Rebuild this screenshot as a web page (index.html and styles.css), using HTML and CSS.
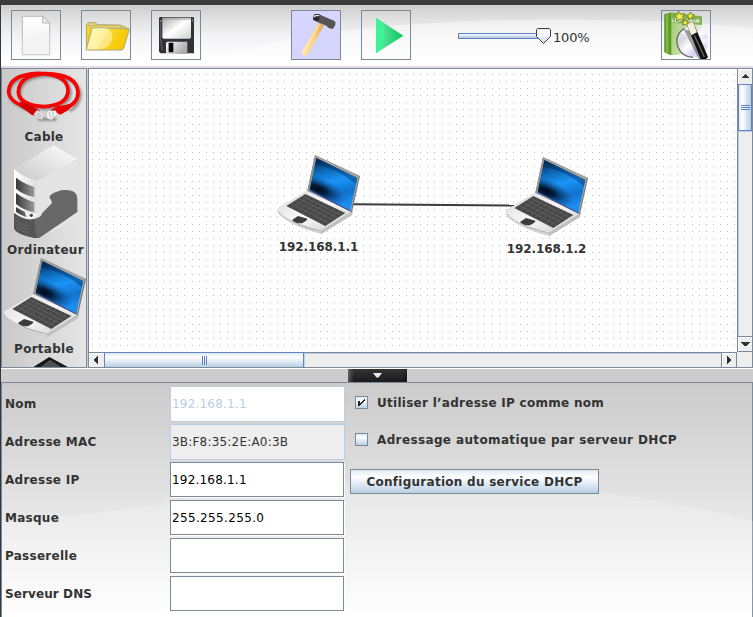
FILE: index.html
```html
<!DOCTYPE html>
<html lang="fr">
<head>
<meta charset="utf-8">
<title>Réseau</title>
<link rel="stylesheet" href="styles.css">
</head>
<body>
<svg class="defs" width="0" height="0">
  <defs>
    <linearGradient id="base" x1="0" y1="0" x2="1" y2="1"><stop offset="0" stop-color="#d8d8d8"/><stop offset=".5" stop-color="#f8f8f8"/><stop offset="1" stop-color="#c8c8c8"/></linearGradient>
    <linearGradient id="screen" x1="0" y1=".1" x2=".2" y2="1"><stop offset="0" stop-color="#06356a"/><stop offset=".22" stop-color="#0d68b8"/><stop offset=".48" stop-color="#1b94f8"/><stop offset=".75" stop-color="#1173cd"/><stop offset="1" stop-color="#1d8eee"/></linearGradient>
    <radialGradient id="shade" gradientUnits="userSpaceOnUse" cx="0" cy="0" r="1" gradientTransform="translate(143 132) rotate(22) scale(92 36)"><stop offset="0" stop-color="#000814"/><stop offset=".3" stop-color="#00142c" stop-opacity=".9"/><stop offset="1" stop-color="#0a4a90" stop-opacity="0"/></radialGradient>
    <symbol id="laptop" viewBox="21 27 249 240">
      <path d="M24 190 L117 134 L248 199 L246 210 L154 266 Q70 245 31 211 Q21 203 24 190Z" fill="#a2a2a2"/>
      <path d="M24 190 L117 134 L248 199 L154 257 Q80 241 36 211 Q21 200 24 190Z" fill="url(#base)"/>
      <path d="M26 198 Q70 244 153 258 V266 Q65 245 28 207Z" fill="#d4d4d4"/>
      <path d="M154 257 L246 202 L246 209 L154 266Z" fill="#c2c2c2"/>
      <path d="M49 183 L106 147 L226 204 L166 243Z" fill="#484848"/>
      <path d="M62 175 L178 235 M74 167 L191 227 M86 160 L203 219 M97 153 L215 211" stroke="#858585" stroke-width="1.5" stroke-dasharray="7 2"/>
      <path d="M64 190 L121 155 M79 198 L136 162 M94 206 L151 170 M109 214 L166 177 M125 222 L181 184 M140 230 L196 191 M154 237 L212 198" stroke="#6a6a6a" stroke-width="1.3"/>
      <path d="M66 225 L84 213 L112 221 Q113 226 95 235 Q76 236 66 225Z" fill="#3c3c3c"/>
      <path d="M112 137 L135 30 L270 93 L246 202Z" fill="#777"/>
      <path d="M116 135 L138 36 L266 95 L243 199Z" fill="#b0aaa2"/>
      <path d="M119 134 L138 38 L262 98 L241 197Z" fill="url(#screen)"/>
      <path d="M119 134 L138 38 L262 98 L241 197Z" fill="url(#shade)"/>
      <path d="M138 38 L262 98 L258 118 Q195 66 135 61Z" fill="#042347" opacity=".38"/>
      <path d="M119 135 L241 198" stroke="#26389c" stroke-width="2.5"/>
      <path d="M112 137 L135 31 L140 34 L117 139Z" fill="#939393"/>
      <path d="M136 31 L268 92 L267 96 L137 37Z" fill="#b5b5b5" opacity=".65"/>
    </symbol>
    <pattern id="grid" width="50" height="50" patternUnits="userSpaceOnUse" x="3" y="5">
      <path d="M0 .5H43M0 7.5H43M0 14.5H43M0 21.5H43M0 28.5H43M0 35.5H43M0 42.5H43" stroke="#bdbdbd" stroke-dasharray="1 6" shape-rendering="crispEdges"/>
    </pattern>
  </defs>
</svg>
<div class="window">
  <header class="toolbar">
    <button class="tool"><svg width="48" height="48" viewBox="36 33 144 144"><defs><linearGradient id="paper" x1="0" y1="0" x2="0" y2="1"><stop offset="0" stop-color="#fff"/><stop offset=".45" stop-color="#f7f7f7"/><stop offset="1" stop-color="#fff"/></linearGradient></defs><path d="M67 49H128L149 69V164H67Z" fill="url(#paper)" stroke="#a9a9a9" stroke-width="2.4"/><path d="M68 123Q100 99 148 98V163H68Z" fill="#f1f1f1" opacity=".8"/><path d="M128 49V69H149Z" fill="#ececec" stroke="#a9a9a9" stroke-width="2.4"/></svg></button>
    <button class="tool"><svg width="48" height="48" viewBox="246 33 144 144"><defs><linearGradient id="fold" x1="0" y1="0" x2="1" y2=".3"><stop offset="0" stop-color="#fff4a8"/><stop offset=".5" stop-color="#fde860"/><stop offset=".52" stop-color="#fbd82c"/><stop offset="1" stop-color="#f8c800"/></linearGradient></defs><path d="M259 148V76L265 68H287L291 74L360 75L385 86L363 145Z" fill="#f9d01c" stroke="#aaa78a" stroke-width="3"/><path d="M264 76V68H287V76Z" fill="#f5d765" stroke="#aaa78a" stroke-width="2"/><path d="M266 77H358L368 84L274 86Z" fill="#e8d373" stroke="#b9ad72" stroke-width="1.5"/><path d="M258 150L276 86Q277 83 282 83L388 87L371 145Q369 150 364 150Z" fill="url(#fold)" stroke="#aaa78a" stroke-width="3"/><path d="M262 147L278 88Q303 79 325 87Q345 100 333 126Q324 144 302 147Z" fill="#fffbd5" opacity=".5"/></svg></button>
    <button class="tool"><svg width="48" height="48" viewBox="456 33 144 144"><defs><linearGradient id="metal" x1="0" y1="0" x2="1" y2="1"><stop offset="0" stop-color="#aaa"/><stop offset=".5" stop-color="#fff"/><stop offset="1" stop-color="#d0d0d0"/></linearGradient><linearGradient id="metal2" x1="0" y1="0" x2="1" y2=".5"><stop offset="0" stop-color="#fff"/><stop offset="1" stop-color="#aaa"/></linearGradient></defs><path d="M479 51H580L582 54V160H481L477 154V54Z" fill="#30333a"/><path d="M482 68Q480 119 487 150" stroke="#565961" stroke-width="4" fill="none"/><path d="M487 53H573V112L569 116H491L487 112Z" fill="url(#metal)"/><path d="M487 53H573V60H487Z" fill="#999" opacity=".5"/><path d="M498 129L502 125H562V162H498Z" fill="url(#metal2)"/><rect x="506" y="128" width="14" height="29" rx="2" fill="#080808"/><path d="M480 60H485V66H480ZM576 57H579V65H576Z" fill="#777"/></svg></button>
    <button class="tool tool--active tool--design"><svg width="48" height="48" viewBox="36 33 144 144"><defs><linearGradient id="wood"><stop offset="0" stop-color="#ffe8ac"/><stop offset=".55" stop-color="#ffd17c"/><stop offset="1" stop-color="#d9a95f"/></linearGradient></defs><path d="M117 67L133 75L84 162Q80 169 73 167Q64 163 66 154Z" fill="url(#wood)"/><path d="M118 72L69 158" stroke="#fff3cc" stroke-width="3"/><path d="M102 45Q105 40 116 43L164 63Q169 68 165 77L158 87L146 84L139 77L112 66L99 59Z" fill="#555"/><path d="M102 45Q105 40 116 43L122 45L114 65L99 59Z" fill="#292929"/><path d="M103 51L106 47L118 47" stroke="#e8e8e8" stroke-width="4" fill="none"/></svg></button>
    <button class="tool"><svg width="48" height="48" viewBox="246 33 144 144"><defs><linearGradient id="play"><stop offset="0" stop-color="#6cebaa"/><stop offset="1" stop-color="#08c45c"/></linearGradient></defs><path d="M288 53L370 107L288 160Z" fill="url(#play)"/><path d="M288 53L303 63Q323 103 302 150L288 160Z" fill="#3df395"/></svg></button>
    <div class="speed">
      <svg width="96" height="18" viewBox="0 0 96 18"><defs><linearGradient id="track" x1="0" y1="0" x2="0" y2="1"><stop offset="0" stop-color="#fff"/><stop offset=".5" stop-color="#d4e2ef"/><stop offset="1" stop-color="#9ebbe0"/></linearGradient><linearGradient id="thumb" x1="0" y1="0" x2="0" y2="1"><stop offset="0" stop-color="#dce8f3"/><stop offset=".3" stop-color="#fff"/><stop offset="1" stop-color="#c5d9ed"/></linearGradient></defs><rect x=".5" y="6.5" width="85" height="5" fill="url(#track)" stroke="#6382bf"/><path d="M79.5 1.5H91.5L92.5 2.5V9.5L85.5 16.5L78.5 9.5V2.5Z" fill="url(#thumb)" stroke="#3b4046"/></svg>
      <span class="speed__value">100%</span>
    </div>
    <button class="tool tool--wizard"><svg width="48" height="48" viewBox="666 33 144 144"><defs><linearGradient id="green" x1="0" y1="0" x2="1" y2=".3"><stop offset="0" stop-color="#8fc356"/><stop offset=".45" stop-color="#b5d68f"/><stop offset="1" stop-color="#e4efd8"/></linearGradient><linearGradient id="disc" x1="0" y1="0" x2="1" y2="1"><stop offset="0" stop-color="#f4f4ff"/><stop offset=".3" stop-color="#d5d6de"/><stop offset=".5" stop-color="#fff"/><stop offset=".7" stop-color="#d3d4f2"/><stop offset="1" stop-color="#f4f4f4"/></linearGradient></defs><path d="M673 43L695 36L786 48L784 158L694 166L673 157Z" fill="url(#green)"/><path d="M673 43L694 38V166L673 157Z" fill="#5e9927"/><path d="M678 44L685 42V162L678 158Z" fill="#80ba44"/><path d="M694 38L786 49V75L694 68Z" fill="#83b054"/><path d="M699 56l-4 3 7 4-7 3M706 56h7v10h-7zM719 66V57h8M719 61h6M731 57h8M735 57v10M743 57l3 10 4-7 3 7 3-10M759 68l4-10 4 10M770 68V59h7v5h-6l7 4" fill="none" stroke="#f3f9ec" stroke-width="2.4"/><circle cx="758" cy="125" r="47" fill="url(#disc)"/><path d="M733 85Q702 106 714 141Q726 171 759 172" stroke="#666b68" stroke-width="4" fill="none"/><path d="M758 125L721 97L742 84ZM758 125L804 113L804 136Z" fill="#fff" opacity=".65"/><path d="M731 88L776 177H790L749 92Z" fill="#444" opacity=".5"/><path d="M740 73L759 65L804 171L798 177H782Z" fill="#111"/><path d="M740 73L759 65L771 97L754 106Z" fill="#f5eed8"/><path d="M763 106L793 171" stroke="#6d6d6d" stroke-width="4"/><path d="M715 33L721 43L733 40L728 49L733 59L721 57L711 63L711 53L703 46L713 44ZM751 36L755 43L762 43L757 49L760 57L752 54L745 59L746 51L740 46L748 44ZM736 58L739 64L746 65L741 70L741 77L735 73L728 76L730 69L725 64L733 64Z" fill="#f1ee45" stroke="#6b7025" stroke-width="2.4"/></svg></button>
  </header>
  <main class="workspace">
    <aside class="palette">
      <div class="part"><svg class="part__cable" width="86" height="58" viewBox="3 12 258 174"><defs><filter id="soft"><feGaussianBlur stdDeviation="3"/></filter></defs><g fill="none" stroke="#555" stroke-width="9" opacity=".6" filter="url(#soft)" transform="translate(4 6)"><path d="M104 138Q25 117 24 82Q26 31 115 27Q205 29 207 79Q206 124 132 128Q58 124 55 84Q57 32 137 29Q232 30 237 86Q235 119 205 135M110 160H165"/></g><g fill="none" stroke="#f60303" stroke-width="11"><path d="M104 138Q25 117 26 82Q28 31 115 28Q203 31 204 79Q204 124 132 128Q58 124 55 84Q57 32 137 29Q230 30 234 84Q235 117 198 132"/></g><path d="M59 113Q74 117 89 122L119 139L108 154H96L80 141L63 130Z" fill="#d00000"/><path d="M217 117L207 137L181 152L165 143L147 141L174 125L193 124Z" fill="#e80000"/><path d="M101 151L111 138L135 151L126 167L116 165Z" fill="#e4e4e4" stroke="#888"/><path d="M112 146L126 157M109 151L122 162" stroke="#888" stroke-width="2"/><path d="M138 151L144 139L168 140L172 152L154 168L142 164Z" fill="#f4f4f4" stroke="#888"/><path d="M147 144L152 164M158 142L160 160" stroke="#999" stroke-width="2"/></svg><span class="part__name">Cable</span></div>
      <div class="part part--pc"><svg width="86" height="94" viewBox="3 243 258 282"><defs><linearGradient id="top" x1="1" y1="0" x2="0" y2="1"><stop offset="0" stop-color="#fff"/><stop offset="1" stop-color="#c7c7c7"/></linearGradient><linearGradient id="front"><stop offset="0" stop-color="#fff"/><stop offset="1" stop-color="#dedede"/></linearGradient><linearGradient id="slot"><stop offset="0" stop-color="#383838"/><stop offset="1" stop-color="#999"/></linearGradient></defs><path d="M42 315L160 243L232 286L110 352Q74 338 42 315Z" fill="url(#top)"/><path d="M110 350L232 285V463L118 522H105Z" fill="#e4e4e4"/><path d="M42 315Q72 341 110 350V468Q85 466 42 442Z" fill="url(#front)"/><path d="M149 395Q177 375 205 379Q232 381 232 404V444L118 522H105Q47 511 42 492V447Q78 473 101 465Q125 461 126 448L156 417Q156 409 149 402Z" fill="#686868"/><path d="M42 447Q78 473 101 465L110 522H105Q47 511 42 492Z" fill="#555"/><path d="M42 430Q78 467 111 452L102 464Q72 468 42 446Z" fill="#f6f6f6"/><path d="M48 341Q72 359 103 369V399Q69 392 48 374ZM48 387Q72 405 103 415V445Q69 438 48 420ZM48 429Q72 446 103 451V462Q69 461 48 443Z" fill="url(#slot)"/><path d="M74 441Q93 451 112 449Q109 464 87 464Q76 458 74 441Z" fill="#f5f5f5"/><circle cx="94" cy="454" r="5" fill="#444"/><path d="M48 471Q62 483 85 485M48 481Q62 493 85 495M50 491Q66 504 85 505" stroke="#707070" stroke-width="2" fill="none"/></svg><span class="part__name">Ordinateur</span></div>
      <div class="part part--laptop"><svg width="83" height="80"><use href="#laptop"/></svg><span class="part__name">Portable</span></div>
      <div class="part part--next"><svg width="86" height="11" viewBox="3 440 258 33"><path d="M94 474L148 440L211 474Z" fill="#161616"/><path d="M116 474L150 448L189 474Z" fill="#505050"/></svg></div>
    </aside>
    <section class="editor">
      <div class="canvas">
        <svg width="648" height="283"><rect width="648" height="283" fill="url(#grid)"/><path d="M264 135.2L428 136.5" stroke="#3b3b3b" stroke-width="2"/></svg>
        <div class="node node--one"><svg width="83" height="80"><use href="#laptop"/></svg><span class="node__name">192.168.1.1</span></div>
        <div class="node node--two"><svg width="83" height="80"><use href="#laptop"/></svg><span class="node__name">192.168.1.2</span></div>
      </div>
      <div class="vbar"><span class="arrow"><svg width="9" height="5"><path d="M4 0h1v1h1v1h1v1h1v1H1V3h1V2h1V1h1Z" fill="#333"/></svg></span><span class="vthumb"></span><span class="vtrack"></span><span class="arrow arrow--down"><svg width="9" height="5"><path d="M0 0h9v1H8v1H7v1H6v1H3V3H2V2H1V1H0Z" fill="#333"/></svg></span></div>
      <div class="hbar"><span class="arrow"><svg width="5" height="9"><path d="M4 0v8H3V7H2V6H1V5H0V3h1V2h1V1h1V0Z" fill="#333"/></svg></span><span class="hthumb"></span><span class="htrack"></span><span class="arrow arrow--right"><svg width="5" height="9"><path d="M0 0h1v1h1v1h1v1h1v2H3v1H2v1H1v1H0Z" fill="#333"/></svg></span></div>
      <div class="corner"></div>
    </section>
  </main>
  <div class="splitter"><div class="splitter__handle"><svg width="9" height="5"><path d="M0 0h9L5.5 4.5h-2Z" fill="#e3edf8"/></svg></div></div>
  <section class="details">
    <svg class="sheen" width="751" height="234" viewBox="0 0 751 234"><defs><linearGradient id="sheenFill" x1="0" y1="0" x2="0" y2="1"><stop offset="0" stop-color="#fff" stop-opacity=".22"/><stop offset="1" stop-color="#fff" stop-opacity=".1"/></linearGradient></defs><path d="M0 138Q100 132 190 115Q320 94 455 98Q625 105 751 138V234H0Z" fill="url(#sheenFill)"/></svg>
    <div class="fields">
      <label class="row"><span class="row__name">Nom</span><span class="box box--disabled">192.168.1.1</span></label>
      <label class="row"><span class="row__name">Adresse MAC</span><span class="box box--readonly">3B:F8:35:2E:A0:3B</span></label>
      <label class="row"><span class="row__name">Adresse IP</span><span class="box">192.168.1.1</span></label>
      <label class="row"><span class="row__name">Masque</span><span class="box box--mask">255.255.255.0</span></label>
      <label class="row"><span class="row__name">Passerelle</span><span class="box"></span></label>
      <label class="row"><span class="row__name row__name--dns">Serveur DNS</span><span class="box"></span></label>
    </div>
    <div class="options">
      <div class="option"><span class="check"><svg width="11" height="11"><path d="M2 4h2v2h1V5h1V4h1V3h1V2h1v2H8v1H7v1H6v1H5v1H4v1H2Z" fill="#222"/></svg></span><span>Utiliser l’adresse IP comme nom</span></div>
      <div class="option option--dhcp"><span class="check"></span><span>Adressage automatique par serveur DHCP</span></div>
      <button class="config">Configuration du service DHCP</button>
    </div>
  </section>
</div>
</body>
</html>
```
FILE: styles.css
```css
* { box-sizing: border-box; }
body { margin: 0; width: 753px; height: 617px; overflow: hidden; background: #cdcdcd; color: #333; font: bold 12px/16px "DejaVu Sans", sans-serif; letter-spacing: .27px; }
svg { display: block; flex: none; }
button { font: inherit; letter-spacing: inherit; color: inherit; padding: 0; border-radius: 0; }
.defs { position: absolute; }
.window { display: flex; flex-direction: column; height: 617px; border-top: 5px solid #3b3b3b; border-left: 1px solid #37373b; }
.toolbar { display: flex; height: 63px; padding: 5px 0 0 10px; gap: 20px; flex: none; background: radial-gradient(ellipse 340px 48px at 560px 62px, #ffffff70 98%, transparent 100%), linear-gradient(#cecece, #e2e2e2 25%, #f2f2f4 50%, #fff 90%); border-bottom: 2px solid #e5dde5; }
.tool { width: 50px; height: 50px; flex: none; border: 1px solid #7a8a99; background: transparent; }
.tool--active { background: #d5d5ff; }
.tool--design { margin-left: 70px; }
.speed { display: flex; width: 145px; margin: 17px 0 0 27px; }
.speed__value { font-size: 13px; font-weight: normal; letter-spacing: -.2px; margin: 3px 0 0 -1px; }
.tool--wizard { margin-left: 38px; }
.workspace { display: flex; height: 300px; flex: none; gap: 1px; }
.palette { width: 86px; overflow: hidden; border: 1px solid #7a8a99; background: linear-gradient(90deg, #c9c9c9, #e5e5e5); }
.part { display: flex; flex-direction: column; align-items: center; height: 76px; }
.part__name { margin-top: 3px; white-space: nowrap; }
.part__cable { margin-top: -1px; }
.part--pc { height: 113px; }
.part--pc .part__name { margin-top: 3px; margin-left: 3px; letter-spacing: .3px; }
.part--laptop { height: 99px; }
.part--laptop svg { margin-top: -1px; }
.part--laptop .part__name { margin-top: 4px; }
.editor { display: grid; flex: 1; grid-template-columns: 648px 15px; grid-template-rows: 283px 15px; border: 1px solid #7a8a99; background: #fff; }
.canvas { position: relative; overflow: hidden; }
.node { position: absolute; display: flex; flex-direction: column; align-items: center; width: 83px; }
.node--one { left: 188px; top: 85px; }
.node--two { left: 416px; top: 87px; }
.node__name { margin-top: 5px; letter-spacing: -.1px; white-space: nowrap; }
.vbar { display: flex; flex-direction: column; border-left: 1px solid #7a8a99; background: #eee; }
.arrow { display: flex; align-items: center; justify-content: center; flex: none; height: 15px; box-shadow: inset 1px 1px #fff; }
.arrow--down { height: 16px; border-top: 1px solid #7a8a99; border-bottom: 1px solid #7a8a99; }
.vthumb { height: 47px; flex: none; border: 1px solid #6382bf; background: linear-gradient(#6382bf, #6382bf) 50% 20px / 9px 1px no-repeat, linear-gradient(#6382bf, #6382bf) 50% 22px / 9px 1px no-repeat, linear-gradient(#6382bf, #6382bf) 50% 24px / 9px 1px no-repeat, linear-gradient(90deg, #dce8f3, #fff 25%, #b8cfe5); }
.vtrack { flex: 1; box-shadow: inset 1px 1px #b8cfe5; }
.hbar { display: flex; border-top: 1px solid #7a8a99; background: #eee; }
.hbar .arrow { width: 15px; height: 14px; }
.hthumb { width: 200px; margin-top: -1px; border: 1px solid #6382bf; border-bottom: 0; background: linear-gradient(#6382bf, #6382bf) 97px 3px / 1px 9px no-repeat, linear-gradient(#6382bf, #6382bf) 99px 3px / 1px 9px no-repeat, linear-gradient(#6382bf, #6382bf) 101px 3px / 1px 9px no-repeat, linear-gradient(#dce8f3, #fff 30%, #b8cfe5); }
.htrack { flex: 1; box-shadow: inset 1px 1px #b8cfe5; }
.hbar .arrow--right { width: 16px; border-left: 1px solid #7a8a99; border-right: 1px solid #7a8a99; }
.corner { border-top: 1px solid #eee; background: #eee; }
.splitter { display: flex; height: 14px; flex: none; border-top: 1px solid #fff; background: #cdcdcd; }
.splitter__handle { display: flex; align-items: center; justify-content: center; width: 59px; margin-left: 347px; background: linear-gradient(90deg, #ffffff40, transparent 10%, transparent 90%, #00000040), linear-gradient(#333, #1b1b1b); }
.details { position: relative; display: flex; flex: 1; border: 1px solid #7a8a99; border-bottom: 0; background: linear-gradient(#cbcbcb, #e0e0e0 44%, #f2f2f2 75%, #fff 100%); }
.sheen { position: absolute; inset: 0; }
.fields { position: relative; display: flex; flex-direction: column; width: 343px; gap: 2px; padding: 3px 0 0 3px; }
.row { display: flex; align-items: flex-start; height: 36px; line-height: 36px; }
.row__name { width: 165px; }
.row__name--dns { letter-spacing: .1px; }
.box { width: 174px; height: 35px; line-height: 34px; padding-left: 1px; border: 1px solid #7a8a99; box-shadow: 1px 1px #fff; background: #fff; color: #000; font-weight: normal; letter-spacing: .2px; }
.box--mask { letter-spacing: .35px; }
.box--disabled, .box--readonly { width: 175px; height: 36px; border-color: #b8cfe5; box-shadow: none; }
.box--disabled { color: #b8cfe5; }
.box--readonly { background: #eee; color: #333; }
.options { position: relative; padding: 12px 0 0 5px; }
.option { display: flex; gap: 9px; height: 16px; margin-left: 5px; align-items: center; white-space: nowrap; }
.option--dhcp { margin-top: 21px; letter-spacing: .37px; }
.check { width: 13px; height: 13px; margin-top: -1px; border: 1px solid #7a8a99; background: linear-gradient(#dce8f3, #fff 30%, #b8cfe5); }
.config { display: block; width: 249px; height: 25px; margin-top: 21px; border: 1px solid #7a8a99; background: linear-gradient(#dfe9f3, #fff 30%, #b8cfe5); }
```
